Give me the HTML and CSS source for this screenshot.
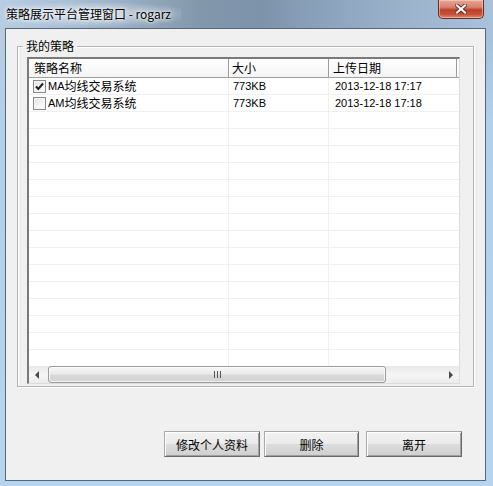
FILE: index.html
```html
<!DOCTYPE html>
<html lang="zh-CN">
<head>
<meta charset="utf-8">
<title>策略展示平台管理窗口</title>
<link rel="stylesheet" href="styles.css">
</head>
<body>
<div class="window">
  <div class="titlebar">
    <span class="title">策略展示平台管理窗口 - rogarz</span>
    <div class="close">
      <svg width="12" height="10" viewBox="0 0 12 10"><path d="M2 1.5 L10 8.5 M10 1.5 L2 8.5" stroke="#5e2419" stroke-width="3.8" stroke-linecap="square"/><path d="M2 1.5 L10 8.5 M10 1.5 L2 8.5" stroke="#ffffff" stroke-width="2.2" stroke-linecap="square"/></svg>
    </div>
  </div>
  <div class="client">
    <fieldset class="group">
      <legend class="group-label">我的策略</legend>
      <div class="list">
        <div class="header">
          <div class="hcol c1">策略名称</div>
          <div class="hcol c2">大小</div>
          <div class="hcol c3">上传日期</div>
        </div>
        <div class="rows">
          <div class="row">
            <div class="cell c1">
              <span class="check checked"><svg width="11" height="11" viewBox="0 0 11 11"><path d="M2 5.5 L4.3 8 L9 2.5" fill="none" stroke="#1e1e1e" stroke-width="2"/></svg></span>
              <span class="lat">MA</span>均线交易系统
            </div>
            <div class="cell c2 lat">773KB</div>
            <div class="cell c3 lat">2013-12-18 17:17</div>
          </div>
          <div class="row">
            <div class="cell c1">
              <span class="check"></span>
              <span class="lat">AM</span>均线交易系统
            </div>
            <div class="cell c2 lat">773KB</div>
            <div class="cell c3 lat">2013-12-18 17:18</div>
          </div>
          <div class="row"><div class="cell c1"></div><div class="cell c2"></div><div class="cell c3"></div></div>
          <div class="row"><div class="cell c1"></div><div class="cell c2"></div><div class="cell c3"></div></div>
          <div class="row"><div class="cell c1"></div><div class="cell c2"></div><div class="cell c3"></div></div>
          <div class="row"><div class="cell c1"></div><div class="cell c2"></div><div class="cell c3"></div></div>
          <div class="row"><div class="cell c1"></div><div class="cell c2"></div><div class="cell c3"></div></div>
          <div class="row"><div class="cell c1"></div><div class="cell c2"></div><div class="cell c3"></div></div>
          <div class="row"><div class="cell c1"></div><div class="cell c2"></div><div class="cell c3"></div></div>
          <div class="row"><div class="cell c1"></div><div class="cell c2"></div><div class="cell c3"></div></div>
          <div class="row"><div class="cell c1"></div><div class="cell c2"></div><div class="cell c3"></div></div>
          <div class="row"><div class="cell c1"></div><div class="cell c2"></div><div class="cell c3"></div></div>
          <div class="row"><div class="cell c1"></div><div class="cell c2"></div><div class="cell c3"></div></div>
          <div class="row"><div class="cell c1"></div><div class="cell c2"></div><div class="cell c3"></div></div>
          <div class="row"><div class="cell c1"></div><div class="cell c2"></div><div class="cell c3"></div></div>
          <div class="row"><div class="cell c1"></div><div class="cell c2"></div><div class="cell c3"></div></div>
          <div class="row"><div class="cell c1"></div><div class="cell c2"></div><div class="cell c3"></div></div>
        </div>
        <div class="hscroll">
          <div class="arrow"><svg width="5" height="8" viewBox="0 0 5 8"><path d="M4 0 L0 4 L4 8 Z" fill="#4a4a4a"/></svg></div>
          <div class="thumb">
            <svg width="7" height="7" viewBox="0 0 7 7"><path d="M0.5 0 V7 M3.5 0 V7 M6.5 0 V7" stroke="#555" stroke-width="1"/></svg>
          </div>
          <div class="track"></div>
          <div class="arrow"><svg width="5" height="8" viewBox="0 0 5 8"><path d="M1 0 L5 4 L1 8 Z" fill="#4a4a4a"/></svg></div>
        </div>
      </div>
    </fieldset>
    <div class="buttons">
      <button class="btn b1">修改个人资料</button>
      <button class="btn b2">删除</button>
      <button class="btn b3">离开</button>
    </div>
  </div>
</div>
</body>
</html>
```
FILE: styles.css
```css
html, body {
  margin: 0;
  padding: 0;
}
body {
  width: 493px;
  height: 486px;
  overflow: hidden;
  font-family: "Noto Sans CJK SC", "Liberation Sans", sans-serif;
  font-size: 12px;
  color: #000;
}
.window {
  width: 493px;
  height: 486px;
  background:
    linear-gradient(180deg, rgba(255,255,255,0) 0px, rgba(255,255,255,0) 40px, #b4cfea 120px, #b8d3ee 100%),
    linear-gradient(90deg, #b9cde2 0px, #a7bdd3 80px, #8397ab 200px, #7d93aa 260px, #8ea6bf 340px, #9db5cd 420px, #a9c2dc 493px);
  display: flex;
  flex-direction: column;
}
.titlebar {
  height: 28px;
  display: flex;
  justify-content: space-between;
  align-items: flex-start;
  flex: none;
}
.title {
  margin-left: 6px;
  line-height: 28px;
  height: 28px;
  font-size: 12px;
  color: #000;
  background: radial-gradient(ellipse 60% 45% at 50% 50%, rgba(255,255,255,0.55), rgba(255,255,255,0));
  padding: 0 10px 0 0;
  text-shadow: 0 0 6px #fff, 0 0 3px #fff;
}
.close {
  margin-right: 9px;
  width: 46px;
  height: 19px;
  box-sizing: border-box;
  border: 1px solid #6d2a20;
  border-top: none;
  border-radius: 0 0 5px 5px;
  background: linear-gradient(180deg, #e7a796 0%, #d7826e 40%, #bf3f28 55%, #c8513a 80%, #dc8a70 100%);
  box-shadow: inset 0 0 0 1px rgba(255,220,210,0.5);
  display: flex;
  align-items: center;
  justify-content: center;
}
.client {
  margin-left: 5px;
  width: 481px;
  height: 453px;
  box-sizing: border-box;
  border: 1px solid #56677a;
  background: #f0f0f0;
  display: flex;
  flex-direction: column;
  align-items: flex-start;
}
.group {
  margin: 11px 0 0 11px;
  width: 457px;
  box-sizing: border-box;
  padding: 5px 13px 2px 9px;
  border: 1px solid #b4b4b4;
  box-shadow: 1px 1px 0 #fff, inset 1px 1px 0 #fff;
  min-inline-size: 0;
}
.group-label {
  margin-left: -4px;
  padding: 0 3px;
  font-size: 12px;
  line-height: 12px;
  height: 12px;
}
.list {
  width: 433px;
  box-sizing: border-box;
  border-top: 2px solid #7a7a7a;
  border-left: 2px solid #7a7a7a;
  border-right: 1px solid #dcdcdc;
  border-bottom: 1px solid #dcdcdc;
  background: #fff;
  display: flex;
  flex-direction: column;
}
.header {
  height: 19px;
  display: flex;
  box-sizing: border-box;
  border-bottom: 1px solid #a0a0a0;
  background: linear-gradient(180deg, #ffffff 0%, #f4f4f4 100%);
}
.hcol {
  box-sizing: border-box;
  line-height: 18px;
  font-size: 12px;
  border-right: 1px solid #9a9a9a;
  box-shadow: 1px 0 0 #fff;
}
.hcol.c1 { width: 200px; padding-left: 5px; }
.hcol.c2 { width: 100px; padding-left: 3px; }
.hcol.c3 { width: 128px; padding-left: 4px; }
.rows {
  height: 288px;
  overflow: hidden;
  display: flex;
  flex-direction: column;
}
.row {
  height: 17px;
  flex: none;
  display: flex;
  box-sizing: border-box;
  border-bottom: 1px solid #f0f0f0;
}
.cell {
  box-sizing: border-box;
  height: 16px;
  line-height: 16px;
  font-size: 12px;
  display: flex;
  align-items: center;
  white-space: nowrap;
}
.cell.c1 { width: 200px; padding-left: 4px; border-right: 1px solid #f0f0f0; }
.cell.c2 { width: 100px; padding-left: 4px; border-right: 1px solid #f0f0f0; }
.cell.c3 { flex: 1; padding-left: 6px; }
.lat {
  font-family: "Liberation Sans", "DejaVu Sans", sans-serif;
  font-size: 11px;
}
.check {
  width: 13px;
  height: 13px;
  box-sizing: border-box;
  border: 1px solid #8a8a8a;
  background: linear-gradient(135deg, #e2e2e2 0%, #f6f6f6 60%, #ffffff 100%);
  box-shadow: inset 0 0 0 1px #f4f4f4;
  margin-right: 2px;
  display: flex;
  align-items: center;
  justify-content: center;
  flex: none;
}
.hscroll {
  height: 17px;
  display: flex;
  align-items: stretch;
  background: linear-gradient(180deg, #e8e8e8 0%, #f5f5f5 50%, #ececec 100%);
}
.arrow {
  width: 17px;
  display: flex;
  align-items: center;
  justify-content: center;
  flex: none;
}
.thumb {
  width: 338px;
  margin: 0 0 0 2px;
  box-sizing: border-box;
  border: 1px solid #9b9b9b;
  border-radius: 3px;
  background: linear-gradient(180deg, #f7f7f7 0%, #ebebeb 45%, #d9d9d9 55%, #d2d2d2 100%);
  box-shadow: inset 0 0 0 1px rgba(255,255,255,0.7);
  display: flex;
  align-items: center;
  justify-content: center;
  flex: none;
}
.track { flex: 1; }
.buttons {
  margin: 44px 0 0 158px;
  display: flex;
}
.btn {
  height: 26px;
  box-sizing: border-box;
  padding: 0;
  font-family: "Noto Sans CJK SC", sans-serif;
  font-size: 12px;
  color: #000;
  border: 1px solid #a8a8a8;
  border-right-color: #6a6a6a;
  border-bottom-color: #6a6a6a;
  box-shadow: inset 1px 1px 0 #fff, inset -1px -1px 0 #a0a0a0;
  background: linear-gradient(180deg, #f2f2f2 0%, #ebebeb 50%, #dddddd 51%, #cfcfcf 100%);
  border-radius: 0;
}
.b1 { width: 96px; }
.b2 { width: 95px; margin-left: 4px; }
.b3 { width: 96px; margin-left: 7px; }
```
